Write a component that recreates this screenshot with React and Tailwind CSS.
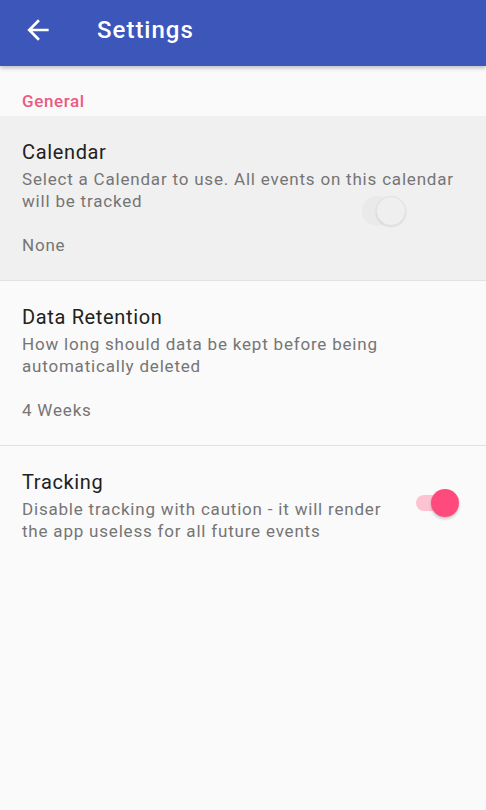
import React from "react";

const font = { fontFamily: "Roboto, 'Noto Sans', sans-serif" };

// --- Switch ---
const OnSwitch = () => (
  <div className="relative w-[46px] h-[30px] flex items-center">
    <div className="absolute left-[2px] w-[32px] h-[16px] rounded-full bg-[#fdc3d3]" />
    <div className="absolute left-[17px] w-[28px] h-[28px] rounded-full bg-[#ff4a7e] shadow-[0_2px_3px_rgba(0,0,0,0.2)]" />
  </div>
);

const OffSwitch = () => (
  <div className="relative w-[46px] h-[30px] flex items-center">
    <div className="absolute left-[-14px] w-[30px] h-[30px] rounded-full bg-[#e8e8e8] opacity-80" />
    <div className="absolute left-[0px] w-[30px] h-[30px] rounded-full bg-[#efefef] border border-[#e2e2e6] shadow-[0_1px_2px_rgba(0,0,0,0.1)]" />
  </div>
);

// --- Setting row ---
const SettingRow = ({ title, summary, value, toggle, active, last, overlay }) => (
  <div
    className={`relative flex items-center pl-[22px] pr-[26px] ${active ? "bg-[#f0f0f0]" : ""} ${
      last ? "" : "border-b border-[#e2e2e2]"
    }`}
  >
    <div className="flex-1 pt-[22px] pb-[24px]">
      <p className="text-[20px] leading-[28px] text-[#212121] tracking-[0.65px]">{title}</p>
      <p className="text-[17px] leading-[22px] text-[#757575] mt-[2px] tracking-[0.8px]">{summary}</p>
      {value && (
        <p className="text-[17px] leading-[22px] text-[#757575] mt-[22px] tracking-[0.8px]">{value}</p>
      )}
    </div>
    {toggle}
    {overlay}
  </div>
);

const App = () => (
  <div style={font} className="w-[486px] h-[810px] bg-[#fafafa] flex flex-col overflow-hidden">
    <header className="h-[66px] bg-[#3c56b9] flex items-center pb-[6px] shadow-[0_2px_4px_rgba(0,0,0,0.25)] z-10">
      <svg className="ml-[22px] w-[32px] h-[32px]" viewBox="0 0 24 24" fill="#fff">
        <path d="M20 11H7.83l5.59-5.59L12 4l-8 8 8 8 1.41-1.41L7.83 13H20v-2z" />
      </svg>
      <h1 className="ml-[43px] text-[24px] font-medium text-white tracking-[1px]">Settings</h1>
    </header>

    <div className="pt-[23px] pb-[4px] pl-[22px] h-[50px]">
      <p className="text-[17px] font-medium text-[#eb5a84] leading-[24px] tracking-[0.6px]">General</p>
    </div>

    <div>
      <SettingRow
        active
        title="Calendar"
        summary="Select a Calendar to use. All events on this calendar will be tracked"
        value="None"
        overlay={
          <div className="absolute left-[376px] top-[80px]">
            <OffSwitch />
          </div>
        }
      />
      <SettingRow
        title="Data Retention"
        summary="How long should data be kept before being automatically deleted"
        value="4 Weeks"
      />
      <SettingRow
        last
        title="Tracking"
        summary="Disable tracking with caution - it will render the app useless for all future events"
        toggle={
          <div className="ml-[10px] -mt-[6px]">
            <OnSwitch />
          </div>
        }
      />
    </div>
  </div>
);

export default App;
